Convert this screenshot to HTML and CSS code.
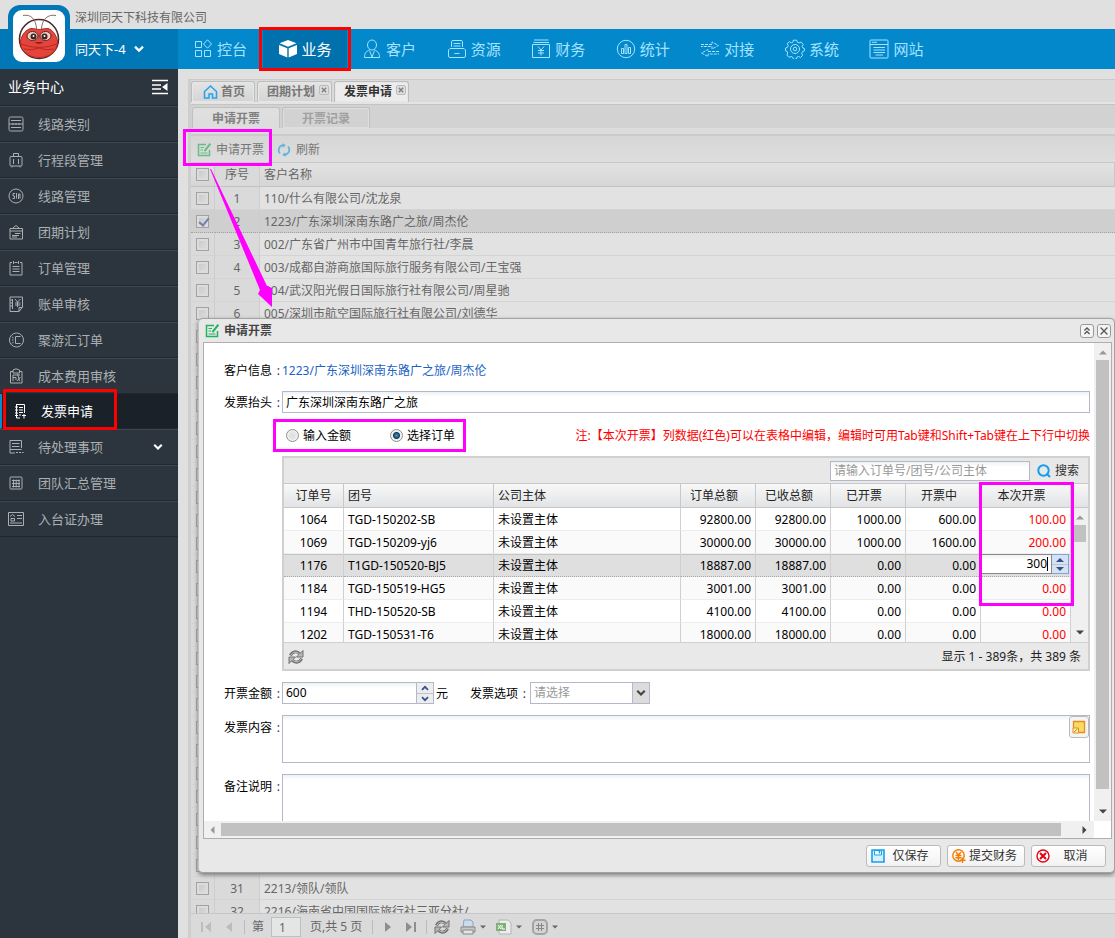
FILE: index.html
```html
<!DOCTYPE html>
<html lang="zh-CN">
<head>
<meta charset="utf-8">
<title>发票申请</title>
<link rel="stylesheet" href="styles.css">
</head>
<body>
<svg class="defs" aria-hidden="true">
  <defs>
    <symbol id="i-edit" viewBox="0 0 14 14"><path d="M9 1.500H1.500V12.500H12.500V7" fill="none" stroke="currentColor" stroke-width="1.500"/><path d="M3.500 4.500H7M3.500 7H6M3.500 10H10.500" stroke="currentColor" fill="none" stroke-width="1.200"/><path d="M13.300.7L7.500 8.200" stroke="currentColor" stroke-width="2"/></symbol>
    <symbol id="i-sync" viewBox="0 0 14 14"><g fill="none" stroke="currentColor" stroke-width="1.700"><path d="M6 2.200A5 5 0 0 0 3 10.500M8 11.800A5 5 0 0 0 11 3.500"/></g><path d="M5.500.2L9 2.300 5.500 4.800zM8.500 9.200V13.800L5 11.700z" fill="currentColor"/></symbol>
    <symbol id="i-reload" viewBox="0 0 16 16"><g fill="none" stroke="#707070" stroke-width="3"><path d="M2.500 6.500C4 2.500 8.500 1.500 12 5"/><path d="M13.500 9.500C12 13.500 7.500 14.500 4 11"/></g><path d="M15 1.500V8H8.500zM1 14.500V8H7.500z" fill="#b8b8b8" stroke="#707070"/><g fill="none" stroke="#c8c8c8"><path d="M3 6C4.500 2.800 8.500 2 12 5.500"/><path d="M13 10C11.500 13.200 7.500 14 4 10.500"/></g></symbol>
    <symbol id="i-down" viewBox="0 0 8 6"><path d="M1 1.200L4 4.200 7 1.200" fill="none" stroke="currentColor" stroke-width="1.700"/></symbol>
    <symbol id="i-up" viewBox="0 0 8 6"><path d="M1 4.800L4 1.800 7 4.800" fill="none" stroke="currentColor" stroke-width="1.700"/></symbol>
    <symbol id="i-tri" viewBox="0 0 8 5"><path d="M0 .5H8L4 4.500z" fill="currentColor"/></symbol>
    <symbol id="i-triup" viewBox="0 0 8 5"><path d="M0 4.500H8L4 .5z" fill="currentColor"/></symbol>
    <symbol id="i-x" viewBox="0 0 10 10"><rect x=".5" y=".5" width="9" height="9" rx="1.500" fill="#dedede" stroke="#bbb"/><path d="M2.800 2.800L7.200 7.200M7.200 2.800L2.800 7.200" stroke="#808080" stroke-width="1.400"/></symbol>
  </defs>
</svg>
<div class="app">
  <header class="top">
    <div class="company">深圳同天下科技有限公司</div>
    <div class="bar">
      <button class="account" type="button">同天下-4 <svg><use href="#i-down"/></svg></button>
      <nav class="nav">
        <a href="#"><svg viewBox="0 0 20 20"><path d="M2.500 2.500h6v6h-6zM2.500 11.500h6v6h-6zM11.500 11.500h6v6h-6zM14.500.8L18.500 5 14.500 9.200 10.500 5z"/></svg>控台</a>
        <a href="#" class="on"><svg class="solid" viewBox="0 0 20 20"><path d="M10 1L18.500 4.300 10 7.800 1.500 4.300zM1 6L9.300 9.300V18.500L1 15zM19 6L10.700 9.300V18.500L19 15z"/></svg>业务</a>
        <a href="#"><svg viewBox="0 0 20 20"><ellipse cx="10" cy="6" rx="4.500" ry="5"/><path d="M7.500 10.500C5 13 2.500 12.500 2.500 18.500H17.500C17.500 12.500 15 13 12.500 10.500M7.500 11.500L10 18M12.500 11.500L10 18"/></svg>客户</a>
        <a href="#"><svg viewBox="0 0 20 20"><path d="M4.500 8V3Q4.500 1.500 6 1.500H14Q15.500 1.500 15.500 3V8M6.500 4.500H13.500M6.500 7H13.500M3 9.500H17L18.500 11V17Q18.500 18.500 17 18.500H3Q1.500 18.500 1.500 17V11zM7.500 14.500H12.500"/></svg>资源</a>
        <a href="#"><svg viewBox="0 0 20 20"><path d="M3 1H17.500M2.500 3.500H18M1.500 5.500H18.500V18.500H1.500zM7 7.500L10 11 13 7.500M10 11V16.500M7 11.500H13M7 14H13"/></svg>财务</a>
        <a href="#"><svg viewBox="0 0 20 20"><circle cx="10" cy="10" r="8.700"/><path d="M5.500 9.500h2v5h-2zM9 5.500h2v9H9zM12.500 8.500h2v6h-2z"/></svg>统计</a>
        <a href="#"><svg viewBox="0 0 20 20"><path d="M1 5.500H12V3L18.500 6.500 12 10V7.500H1" stroke-dasharray="3 1"/><path d="M19 12.500H8V10.500L1.500 14 8 17.500V15H19" stroke-dasharray="3 1"/></svg>对接</a>
        <a href="#"><svg viewBox="0 0 20 20"><path d="M8.300 1.200h3.400l.6 2 1.700.8 2-1 2.200 2.400-1 2 .7 1.600 1.500.5v2.400l-2 .8-.7 1.600 1 2-2.200 2.200-2-1-1.600.7-.7 2H8.400l-.7-2-1.700-.8-2 1L1.800 16l1-2-.7-1.600-1.500-.5V9l2-.8.6-1.600-1-2L4.400 2.800l2 1 1.500-.7z"/><circle cx="10" cy="10" r="4.500"/><circle cx="10" cy="10" r="1.800"/></svg>系统</a>
        <a href="#"><svg viewBox="0 0 20 20"><rect x="1" y="1" width="18" height="18" rx="1"/><path d="M1 5.500H19M3 3.300H8M4.500 8.500H16M4.500 11H16M4.500 13.500H16M6.500 16H14"/></svg>网站</a>
      </nav>
    </div>
    <div class="logo">
      <svg viewBox="0 0 52 52">
        <g fill="none" stroke="#4a2926"><circle cx="26" cy="29" r="19.500" fill="#fff" stroke-width="1.600"/><path d="M23.500 19C23 9 18 4 10 5.500M28.500 19C29 9 35 4 43 5.500" stroke="#8a6a66"/></g>
        <path d="M7.500 31C9 24 13 19.500 18 18.500 22 18.500 24 19.500 26 19.500S31 18.500 35 18.500C39 19.500 43 24 44.500 31 45 41 37 47.500 26 47.500S7 41 7.500 31z" fill="#e5443b" stroke="#b92922"/>
        <path d="M8 34Q26 41 44 34M11 39Q19 41 26 38Q33 41 41 39" fill="none" stroke="#b92922"/>
        <ellipse cx="19.500" cy="26" rx="5.500" ry="4.500" fill="#f4c9c2" stroke="#4a2926"/><ellipse cx="32.500" cy="26" rx="5.500" ry="4.500" fill="#f4c9c2" stroke="#4a2926"/>
        <circle cx="20.500" cy="26.500" r="3" fill="#3a2220"/><circle cx="31.500" cy="26.500" r="3" fill="#3a2220"/><circle cx="20.500" cy="26" r="1" fill="#fff"/><circle cx="31.500" cy="26" r="1" fill="#fff"/>
        <path d="M21.500 32Q26 36 30.500 32z" fill="#8e211b"/>
      </svg>
    </div>
  </header>

  <aside class="side">
    <div class="side-head">业务中心 <button type="button" aria-label="收起"><svg width="16" height="16" viewBox="0 0 16 16"><path d="M0 1.500H16M0 6H9M0 10H9M0 14.500H16" stroke="#fff" stroke-width="1.600"/><path d="M15.500 4V12L10 8z" fill="#fff"/></svg></button></div>
    <a href="#"><svg viewBox="0 0 16 16"><rect x="1" y="1" width="14" height="14" rx="1.500"/><path d="M3 4.500H13M3 11.500H13M1 8H15M5 7V9M8 7V9M11 7V9"/></svg>线路类别</a>
    <a href="#"><svg viewBox="0 0 16 16"><rect x="2" y="4.500" width="12" height="9.500" rx="1"/><path d="M5.500 4V1.500H10.500V4M5.500 7V12M10.500 7V12M4 14V15.500M12 14V15.500"/></svg>行程段管理</a>
    <a href="#"><svg viewBox="0 0 16 16"><circle cx="8" cy="8" r="7"/><path d="M7 5.500H5V8H6.500V10.500H4.500M8.500 5V10.500M10.500 11V6H12V10.500"/></svg>线路管理</a>
    <a href="#"><svg viewBox="0 0 16 16"><path d="M2 4.500H14.500V15H2zM2 7H14.500M5 4L8 1.500 11 4M7 9.500H12.500M4 11.500H11M4 13H9"/></svg>团期计划</a>
    <a href="#"><svg viewBox="0 0 16 16"><path d="M4 2.500H2V15H14V2.500H12M5.500 1V4M10.500 1V4M6.500 2.500H9.500M4.500 6.500H11.500M4.500 9H11.500M4.500 11.500H11.500"/></svg>订单管理</a>
    <a href="#"><svg viewBox="0 0 16 16"><path d="M2 1H14.500V11L11 15.500H2zM11 15.500V11.500H14.500M4.500 3V13M2 4H4M2 7H4M2 10H4M7 3L9.500 6 12.500 3M9.500 6V11M7 7H12.500M7 9H12.500"/></svg>账单审核</a>
    <a href="#"><svg viewBox="0 0 16 16"><circle cx="8.500" cy="8" r="7"/><path d="M12.500 4.500H7.500V11.500H12.500M4 5L5.500 6M4 8H5.500M4 11.500L5.500 10"/></svg>聚游汇订单</a>
    <a href="#"><svg viewBox="0 0 16 16"><path d="M5 3.500H2.500V15H14V3.500H11.500M5 5V2L8 .8 11.500 2V5zM5 7H12M5 7V13M5 9.500H8V12M9.500 5.500L11.500 13M12.500 9L9 13"/></svg>成本费用审核</a>
    <a href="#" class="on"><svg viewBox="0 0 16 16"><path d="M4.500 1.500H12.500V10M8 15H4.500V1M3 4H6M3 7H6M3 10H6M3 12.500H6M7 4.500H11M7 7H11M7 9.500H11M7 12H9M10 12.500H14M12 11V15.500"/></svg>发票申请</a>
    <a href="#"><svg viewBox="0 0 16 16"><path d="M13.500 9V1.500H2V14H7M2 10.500H13.500M4 4.500H11.500M4 7.500H11.500M8 13.500H10M11 13.500H13M14 13.500H15.500"/></svg>待处理事项<svg class="chev" viewBox="0 0 8 6"><use href="#i-down"/></svg></a>
    <a href="#"><svg viewBox="0 0 16 16"><rect x="2" y="2" width="12" height="12" rx="1"/><path d="M4 5.500H12M4 8.500H12M4 11.500H12M5.500 4.500V12.500M8.200 4.500V12.500M11 4.500V12.500"/></svg>团队汇总管理</a>
    <a href="#"><svg viewBox="0 0 16 16"><path d="M.5 1.500H15.500V14.500H.5zM2 5.500L4.500 3.500 7 5.500M3 7.500H6.500V10H3zM9 4.500H14M9 7.500H14M2 12H14"/></svg>入台证办理</a>
  </aside>

  <main class="main">
    <div class="panel">
      <div class="tabs">
        <button type="button"><svg class="home" viewBox="0 0 14 14"><path d="M1 6.500L7 1 13 6.500V13H9V9H5.500V13H1z"/></svg>首页</button>
        <button type="button" class="closable">团期计划<svg class="x"><use href="#i-x"/></svg></button>
        <button type="button" class="closable on">发票申请<svg class="x"><use href="#i-x"/></svg></button>
      </div>
      <div class="subtabs">
        <button type="button" class="on">申请开票</button>
        <button type="button">开票记录</button>
      </div>
      <div class="toolbar">
        <button type="button"><svg class="green"><use href="#i-edit"/></svg>申请开票</button>
        <button type="button"><svg class="blue"><use href="#i-sync"/></svg>刷新</button>
      </div>
      <div class="list">
        <table>
          <colgroup><col class="c-check"><col class="c-no"><col></colgroup>
          <thead><tr><th><input type="checkbox" aria-label="全选"></th><th class="no">序号</th><th class="name">客户名称</th></tr></thead>
          <tbody id="customers"></tbody>
        </table>
      </div>
      <div class="pager">
        <button type="button" class="off" aria-label="首页"><svg width="12" height="12" viewBox="0 0 12 12"><path d="M1 1H3V11H1zM11 1V11L5 6z"/></svg></button>
        <button type="button" class="off" aria-label="上一页"><svg width="12" height="12" viewBox="0 0 12 12"><path d="M9 1V11L3 6z"/></svg></button>
        <i></i>
        <label for="page">第</label><input id="page" type="text" value="1"><span class="total">页,共 5 页</span>
        <i></i>
        <button type="button" aria-label="下一页"><svg width="12" height="12" viewBox="0 0 12 12"><path d="M3 1V11L9 6z"/></svg></button>
        <button type="button" aria-label="末页"><svg width="12" height="12" viewBox="0 0 12 12"><path d="M9 1H11V11H9zM1 1V11L7 6z"/></svg></button>
        <i></i>
        <button type="button" aria-label="刷新"><svg width="16" height="16"><use href="#i-reload"/></svg></button>
        <button type="button" class="drop" aria-label="打印"><svg width="16" height="16" viewBox="0 0 16 16"><path d="M4 1H11L13 3V8H3z" fill="#cddcec" stroke="#8ba3bd"/><path d="M1 8H15V13H1z" fill="#c8c8c8" stroke="#888"/><path d="M3 11H13V15H3z" fill="#e4e4e4" stroke="#888"/></svg><svg width="6" height="4"><use href="#i-tri"/></svg></button>
        <button type="button" class="drop" aria-label="导出"><svg width="16" height="16" viewBox="0 0 16 16"><path d="M3 1H12L15 4V15H3z" fill="#ececec" stroke="#b4b4b4"/><path d="M0 4H10V12H0z" fill="#7fb077"/><path d="M2 6L5 10M5 6L2 10M6 6V10H9" stroke="#fff" fill="none"/></svg><svg width="6" height="4"><use href="#i-tri"/></svg></button>
        <button type="button" class="drop" aria-label="列设置"><svg width="16" height="16" viewBox="0 0 16 16"><rect x="1" y="1" width="14" height="14" rx="4" fill="#d4d4d4" stroke="#a4a4a4" stroke-width="2"/><path d="M6.500 4V12M9.500 4V12M4 6.500H12M4 9.500H12" stroke="#888"/></svg><svg width="6" height="4"><use href="#i-tri"/></svg></button>
      </div>
    </div>
  </main>

  <section class="dialog" role="dialog" aria-labelledby="dlg-title">
    <div class="dlg-head">
      <svg class="green"><use href="#i-edit"/></svg><h2 id="dlg-title">申请开票</h2>
      <button type="button" aria-label="折叠"><svg viewBox="0 0 14 14"><path d="M4 6.500L7 3.500 10 6.500M4 10.500L7 7.500 10 10.500"/></svg></button>
      <button type="button" aria-label="关闭"><svg viewBox="0 0 14 14"><path d="M3 3L11 11M11 3L3 11"/></svg></button>
    </div>
    <div class="dlg-body">
      <form class="form">
        <div class="row info"><span class="lab">客户信息<b>:</b></span><a href="#">1223/广东深圳深南东路广之旅/周杰伦</a></div>
        <div class="row"><label class="lab" for="title">发票抬头<b>:</b></label><input id="title" class="grow" type="text" value="广东深圳深南东路广之旅"></div>
        <div class="row modes">
          <label><input type="radio" name="mode">输入金额</label>
          <label><input type="radio" name="mode" checked>选择订单</label>
          <p>注:【本次开票】列数据(红色)可以在表格中编辑，编辑时可用Tab键和Shift+Tab键在上下行中切换</p>
        </div>
        <div class="orders">
          <div class="find"><input type="text" aria-label="搜索订单" placeholder="请输入订单号/团号/公司主体"><button type="button"><svg viewBox="0 0 14 14"><circle cx="6.500" cy="6.500" r="5.200"/><path d="M9.500 9.500L13 13"/></svg>搜索</button></div>
          <div class="sheet">
            <table>
              <colgroup><col class="w-id"><col class="w-code"><col><col class="w-num"><col class="w-num"><col class="w-num"><col class="w-num"><col class="w-now"></colgroup>
              <thead><tr><th class="id">订单号</th><th class="l">团号</th><th class="l">公司主体</th><th>订单总额</th><th>已收总额</th><th>已开票</th><th>开票中</th><th>本次开票</th></tr></thead>
              <tbody>
                <tr><td>1064</td><td>TGD-150202-SB</td><td>未设置主体</td><td>92800.00</td><td>92800.00</td><td>1000.00</td><td>600.00</td><td>100.00</td></tr>
                <tr><td>1069</td><td>TGD-150209-yj6</td><td>未设置主体</td><td>30000.00</td><td>30000.00</td><td>1000.00</td><td>1600.00</td><td>200.00</td></tr>
                <tr class="sel"><td>1176</td><td>T1GD-150520-BJ5</td><td>未设置主体</td><td>18887.00</td><td>18887.00</td><td>0.00</td><td>0.00</td><td class="editing"><div class="editor"><input type="text" aria-label="本次开票" value="300"><span class="spin"><button type="button" aria-label="增加"><svg><use href="#i-triup"/></svg></button><button type="button" aria-label="减少"><svg><use href="#i-tri"/></svg></button></span></div></td></tr>
                <tr><td>1184</td><td>TGD-150519-HG5</td><td>未设置主体</td><td>3001.00</td><td>3001.00</td><td>0.00</td><td>0.00</td><td>0.00</td></tr>
                <tr><td>1194</td><td>THD-150520-SB</td><td>未设置主体</td><td>4100.00</td><td>4100.00</td><td>0.00</td><td>0.00</td><td>0.00</td></tr>
                <tr><td>1202</td><td>TGD-150531-T6</td><td>未设置主体</td><td>18000.00</td><td>18000.00</td><td>0.00</td><td>0.00</td><td>0.00</td></tr>
              </tbody>
            </table>
            <div class="rail"><div class="rail-head"></div><div class="vbar"><svg class="dim"><use href="#i-triup"/></svg><span class="short"></span><svg class="end"><use href="#i-tri"/></svg></div></div>
          </div>
          <div class="foot"><button type="button" aria-label="刷新"><svg width="16" height="16"><use href="#i-reload"/></svg></button><span>显示 1 - 389条，共 389 条</span></div>
        </div>
        <div class="row"><label class="lab" for="amount">开票金额<b>:</b></label>
          <div class="number"><input id="amount" type="text" value="600"><span class="spin"><button type="button" aria-label="增加"><svg><use href="#i-up"/></svg></button><button type="button" aria-label="减少"><svg><use href="#i-down"/></svg></button></span></div>
          <span class="unit">元</span>
          <label class="lab" for="option">发票选项<b>:</b></label>
          <div class="pick"><select id="option"><option>请选择</option></select><svg viewBox="0 0 8 6"><use href="#i-down"/></svg></div>
        </div>
        <div class="row area"><label class="lab" for="content">发票内容<b>:</b></label><textarea id="content"></textarea>
          <button class="note" type="button" aria-label="选择内容"><svg viewBox="0 0 14 14"><path d="M1.500 1.500H12.500V12.500H6.500L1.500 8z" fill="#f8dc60" stroke="#e88b20" stroke-width="1.300"/><path d="M1 8H6.500V13H1z" fill="#fff3c0" stroke="#e88b20"/><path d="M2 12L5.500 9" stroke="#b58a10"/></svg></button></div>
        <div class="row area"><label class="lab" for="memo">备注说明<b>:</b></label><textarea id="memo"></textarea></div>
      </form>
      <div class="vbar"><svg class="dim"><use href="#i-triup"/></svg><span class="long"></span><svg class="end"><use href="#i-tri"/></svg></div>
      <div class="hbar"><svg class="dim" viewBox="0 0 5 8"><path d="M4.500 0V8L.5 4z" fill="currentColor"/></svg><span></span><svg class="end" viewBox="0 0 5 8"><path d="M.5 0V8L4.500 4z" fill="currentColor"/></svg></div>
    </div>
    <div class="dlg-foot">
      <button type="button"><svg viewBox="0 0 14 14"><path d="M1 1H13V13H1z" fill="#d9f0ff" stroke="#18a0ea" stroke-width="1.600"/><path d="M3.500 1.500H10.500V6H3.500z" fill="#fff" stroke="#18a0ea"/><path d="M8.500 2V4.500" stroke="#18a0ea" stroke-width="1.500"/></svg><span>仅保存</span></button>
      <button type="button" class="wide"><svg viewBox="0 0 14 14"><circle cx="6.500" cy="6.500" r="5.700" fill="none" stroke="#f57c00" stroke-width="1.400"/><path d="M4 3L6.500 6 9 3M6.500 6V11M3.500 6.500H9.500M3.500 8.700H9.500M10.500 8.500V14M8 11.300H13.500" fill="none" stroke="#f57c00" stroke-width="1.400"/></svg><span>提交财务</span></button>
      <button type="button"><svg viewBox="0 0 14 14"><circle cx="7" cy="7" r="6" fill="#fff" stroke="#e60012" stroke-width="1.400"/><path d="M4 4L10 10M10 4L4 10" stroke="#e60012" stroke-width="2"/></svg><span>取消</span></button>
    </div>
  </section>

  <div class="mark red m-nav"></div>
  <div class="mark red m-side"></div>
  <div class="mark m-apply"></div>
  <div class="mark m-mode"></div>
  <div class="mark m-now"></div>
  <svg class="arrow" viewBox="0 0 66 142"><path d="M0 1H1L57 118 62 120 62 139 48 126 50 122z" fill="#f0f"/></svg>
</div>
<script src="app.js"></script>
</body>
</html>
```
FILE: app.js
```js
const names = {
  1: '110/什么有限公司/沈龙泉',
  2: '1223/广东深圳深南东路广之旅/周杰伦',
  3: '002/广东省广州市中国青年旅行社/李晨',
  4: '003/成都自游商旅国际旅行服务有限公司/王宝强',
  5: '004/武汉阳光假日国际旅行社有限公司/周星驰',
  6: '005/深圳市航空国际旅行社有限公司/刘德华',
  31: '2213/领队/领队',
  32: '2216/海南省中国国际旅行社三亚分社/'
};
const body = document.getElementById('customers');
for (let n = 1; n <= 32; n++) {
  const row = body.insertRow();
  const box = document.createElement('input');
  box.type = 'checkbox';
  box.setAttribute('aria-label', '选择第' + n + '行');
  if (n === 2) {
    box.checked = true;
    row.className = 'sel';
  }
  row.insertCell().append(box);
  const no = row.insertCell();
  no.className = 'no';
  no.textContent = names[n] ? n : '';
  const name = row.insertCell();
  name.className = 'name';
  name.textContent = names[n] || '';
}
```
FILE: styles.css
```css
* { box-sizing: border-box; }
body { margin: 0; }
body, button, input, select, textarea { font: 12px/18px "Noto Sans", "Noto Sans CJK SC", sans-serif; }
button { padding: 0; border: 0; background: none; color: inherit; display: flex; align-items: center; }
input, select, textarea { margin: 0; color: #000; border-radius: 0; outline: 0; }
a { text-decoration: none; }
svg { flex: none; display: block; }
h2, p { margin: 0; }
table { border-collapse: separate; border-spacing: 0; table-layout: fixed; width: 100%; }
th { font-weight: 400; }
.defs { position: absolute; width: 0; height: 0; }

.app { position: relative; height: 100vh; min-height: 700px; overflow: hidden; display: grid; grid-template: 69px 1fr / 178px 1fr; background: #e0e0e0; }

/* top bar */
.top { grid-column: 1 / -1; position: relative; }
.company { height: 29px; padding: 9px 0 0 75px; color: #666; }
.bar { height: 40px; display: flex; background: #0388cc; }
.account { width: 178px; padding-left: 75px; gap: 7px; background: #0078b8; color: #fff; font-size: 13px; }
.account svg { width: 12px; height: 8px; }
.nav { flex: 1; max-width: 761px; display: grid; grid-template-columns: repeat(9, 1fr); }
.nav a { display: flex; align-items: center; gap: 4px; padding-left: 15px; color: #a5e3ff; font-size: 15px; }
.nav svg { width: 20px; height: 20px; fill: none; stroke: currentColor; }
.nav .solid { fill: #fff; stroke: none; }
.nav .on { background: #0071ad; color: #fff; }
.logo { position: absolute; left: 8px; top: 5px; width: 62px; height: 64px; padding: 5px; border-radius: 12px 12px 0 0; background: #0078b8; }
.logo svg { width: 52px; height: 52px; border-radius: 9px; background: #fff; }

/* side menu */
.side { background: #2c353d; }
.side-head { height: 37px; padding: 0 10px 0 8px; display: flex; align-items: center; justify-content: space-between; color: #fff; font-size: 14px; border-bottom: 1px solid #20282f; }
.side a { height: 36px; display: flex; align-items: center; gap: 14px; padding: 0 15px 0 8px; color: #aaafb3; font-size: 13px; border-top: 1px solid #3c4850; border-bottom: 1px solid #20282f; }
.side a svg { width: 16px; height: 16px; fill: none; stroke: currentColor; }
.side a .chev { width: 10px; height: 8px; margin-left: auto; color: #fff; stroke: none; }
.side .on { height: 35px; border-top: 0; padding-left: 10px; gap: 13px; border-left: 2px solid #0a8ccc; background: #1a2129; color: #fff; }

/* background panel */
.main { padding: 10px 0 0 10px; min-width: 0; min-height: 0; color: #666; }
.panel { height: 100%; display: flex; flex-direction: column; border-left: 3px solid #cecece; border-top: 1px solid #cacaca; background: #d9d9d9; }
.tabs { height: 24px; flex: none; display: flex; gap: 2px; padding: 1px 0 0; border-bottom: 2px solid #e4e4e4; background: #dadada; }
.tabs button { height: 21px; gap: 3px; padding: 0 9px 0 11px; border: 1px solid #bdbdbd; border-bottom: 0; border-radius: 3px 3px 0 0; background: linear-gradient(#e4e4e4, #d4d4d4); box-shadow: inset 0 0 0 1px #e6e6e6; font-weight: 700; color: #777; }
.tabs .closable { padding: 0 2px 0 9px; }
.tabs .on { background: #ececec; color: #333; }
.tabs .x { width: 10px; height: 10px; align-self: flex-start; margin-top: 3px; margin-left: 1px; }
.home { width: 15px; height: 14px; fill: none; stroke: #20a4f0; stroke-width: 1.5; }
.subtabs { height: 32px; flex: none; display: flex; align-items: flex-start; gap: 2px; padding: 2px 1px 0; border-top: 1px solid #c4c4c4; border-bottom: 2px solid #cbcbcb; background: linear-gradient(#d2d2d2 23px, #dcdcdc 23px); }
.subtabs button { width: 88px; height: 21px; padding-top: 2px; justify-content: center; border: 1px solid #c0c0c0; border-bottom: 0; border-radius: 3px 3px 0 0; box-shadow: inset 0 0 0 1px #dedede; color: #a0a0a0; font-weight: 700; }
.subtabs .on { background: linear-gradient(#e0e0e0, #dcdcdc); color: #808080; }
.toolbar { height: 27px; flex: none; display: flex; gap: 13px; padding: 2px 6px 0; border-bottom: 1px solid #c8c8c8; background: linear-gradient(#d6d6d6, #dedede); color: #777; }
.toolbar button { gap: 5px; }
.toolbar svg { width: 14px; height: 14px; }
.toolbar .green { color: #68bd85; }
.toolbar .blue { color: #62b4e0; }
.list { flex: 1; min-height: 0; overflow: hidden; background: #e2e2e2; }
.c-check { width: 24px; }
.c-no { width: 45px; }
.list th, .list td { height: 23px; padding: 0; border-bottom: 1px solid #d4d4d4; white-space: nowrap; text-align: left; }
.list th { height: 24px; border-bottom-color: #c2c2c2; border-right: 1px solid #c8c8c8; background: linear-gradient(#e2e2e2, #d6d6d6); }
.list td:first-child, .list .no { border-right: 1px solid #cdcdcd; background: #dadada; text-align: center; }
.list td.no, .list td.name { padding-top: 2px; }
.list .name { padding-left: 4px; }
.list .sel td { background: #cfcfcf; border-bottom: 1px dotted #a0a0a0; }
input[type=checkbox] { appearance: none; display: block; width: 13px; height: 13px; margin: 0 5px; border: 1px solid #a2a2a2; background: linear-gradient(135deg, #c4c6ca, #e0e0e0); box-shadow: inset 0 0 0 2px #dcdcdc; }
input[type=checkbox]:checked::after { content: ""; display: block; width: 4px; height: 8px; margin: 0 0 0 4px; border: solid #7480aa; border-width: 0 2px 2px 0; rotate: 40deg; }
.pager { height: 25px; flex: none; display: flex; align-items: center; gap: 7px; padding: 2px 7px 0; border-top: 1px solid #c6c6c6; background: #dadada; }
.pager button { width: 16px; justify-content: center; gap: 4px; fill: #8e8e8e; }
.pager .drop { width: 26px; margin-left: 3px; }
.pager .off { fill: #bcbcbc; }
.pager i { width: 1px; height: 14px; background: #bbb; }
.pager input { width: 30px; height: 20px; padding: 0 7px; border: 1px solid #bcbec8; background: #e4e6e6; color: #666; }
.pager .total { margin: 0 3px 0 2px; }

/* dialog window */
.dialog { position: absolute; inset: 318px 0 65px 198px; display: flex; flex-direction: column; padding: 0 2px 0 4px; border: 1px solid #a2a2a2; border-left-color: #c0c0c0; border-radius: 5px; background: #e8e8e8; box-shadow: 0 2px 4px #777; }
.dlg-head { height: 23px; flex: none; display: flex; align-items: center; gap: 3px; padding: 0 1px 0 2px; }
.dlg-head h2 { flex: 1; margin-left: 2px; font-size: 12px; line-height: 18px; color: #444; }
.green { width: 14px; height: 14px; color: #22b35e; }
.dlg-head button { width: 14px; height: 14px; border: 1px solid #999; border-radius: 3px; background: #f4f4f4; }
.dlg-head button svg { width: 12px; height: 12px; fill: none; stroke: #555; stroke-width: 1.5; }
.dlg-body { flex: 1; min-height: 0; display: grid; grid-template: minmax(0, 1fr) 17px / minmax(0, 1fr) 17px; border: 1px solid #b5abae; background: #fff; }
.form { overflow: hidden; display: flex; flex-direction: column; gap: 11px; padding: 17px 4px 0 20px; }
.row { flex: none; display: flex; align-items: center; min-height: 22px; }
.info { min-height: 20px; padding-top: 2px; }
.info a { color: #1a62c4; }
.lab { width: 58px; display: flex; justify-content: space-between; padding: 2px 2px 0 0; }
.info .lab { padding-top: 0; }
.lab b { font-weight: 400; color: #336; }
.form input[type=text], textarea, select { border: 1px solid #b5b8c8; background: linear-gradient(#eef2f2, #fff 5px); padding: 0 3px; }
.grow { flex: 1; min-width: 0; height: 22px; }
.modes { min-height: 21px; padding: 2px 0 0 62px; gap: 39px; }
.modes label { display: flex; align-items: center; gap: 4px; }
.modes p { margin-left: auto; color: #f00; white-space: nowrap; }
input[type=radio] { appearance: none; width: 13px; height: 13px; border: 1px solid #8e8f8f; border-radius: 50%; background: radial-gradient(#ddd, #f2f2f2); box-shadow: inset 0 0 0 1px #f4f4f4; }
input[type=radio]:checked { background: radial-gradient(#4a9fc5, #123c5a 3px, #eee 4px); }

.orders { flex: none; margin-left: 58px; border: 2px solid #d0d0d0; }
.find { height: 25px; display: flex; align-items: center; justify-content: flex-end; gap: 7px; padding-right: 9px; background: #e8e8e8; }
.form .find input { width: 200px; height: 20px; }
.find input::placeholder { color: #999; opacity: 1; }
.find button { gap: 4px; color: #333; }
.find svg { width: 14px; height: 14px; fill: none; stroke: #109fee; stroke-width: 2; }
.sheet { height: 160px; display: flex; align-items: flex-start; overflow: hidden; border-bottom: 1px solid #d0d0d0; }
.sheet table { flex: 1; min-width: 0; }
.w-id { width: 60px; }
.w-code { width: 150px; }
.w-num { width: 75px; }
.w-now { width: 90px; }
.sheet th { height: 25px; padding: 0 8px 0 0; border: solid #c8c8c8; border-width: 1px 1px 1px 0; background: linear-gradient(#f8f8f8, #e2e3e5); color: #222; }
.sheet .id { padding: 0; }
.sheet .l { padding: 0 4px; text-align: left; }
.sheet td { height: 23px; padding: 2px 4px 0; border-right: 1px solid #d0d0d0; border-bottom: 1px solid #ededed; text-align: right; white-space: nowrap; }
.sheet tr:nth-child(even) td { background: #fafafa; }
.sheet td:nth-child(1) { text-align: center; }
.sheet td:nth-child(2), .sheet td:nth-child(3) { text-align: left; }
.sheet td:last-child { color: #f00; }
.sheet .sel td { background: #dfdfdf; border-bottom: 1px dotted #a8a8a8; box-shadow: inset 0 1px #c4c4c4; }
.sheet .sel .editing { padding: 0 1px 2px 0; }
.editor { height: 20px; display: flex; position: relative; }
.form .editor input { flex: 1; min-width: 0; text-align: right; border-color: #888; border-left: 0; padding-right: 4px; }
.editor::after { content: ""; position: absolute; right: 21px; top: 3px; width: 1px; height: 14px; background: #000; }
.spin { width: 17px; display: grid; grid-template-rows: 1fr 1fr; border: 1px solid #b5b8c8; border-left: 0; background: #ededf0; color: #34508c; }
.spin button { justify-content: center; min-height: 0; }
.spin button + button { border-top: 1px solid #c0c2cc; }
.spin svg { width: 8px; height: 6px; }
.editor .spin { background: #d4e2f3; border-color: #7da5d8; }
.rail { width: 17px; align-self: stretch; display: flex; flex-direction: column; background: #f0f0f0; }
.rail-head { height: 25px; flex: none; border: solid #c8c8c8; border-width: 1px 0; background: linear-gradient(#f8f8f8, #e2e3e5); }
.vbar { flex: 1; display: flex; flex-direction: column; align-items: center; padding: 7px 0; gap: 5px; background: #f0f0f0; color: #444; }
.vbar svg { width: 8px; height: 5px; }
.vbar .dim, .hbar .dim { color: #999; }
.vbar span { width: 13px; background: #c1c1c1; }
.vbar .short { height: 17px; width: 12px; }
.vbar .long { flex: 1; margin-bottom: 15px; }
.vbar .end { margin-top: auto; }
.hbar { display: flex; align-items: center; gap: 6px; padding: 0 7px 0 6px; background: #f0f0f0; color: #444; }
.hbar svg { width: 5px; height: 8px; }
.hbar span { flex: 1; height: 13px; margin-right: 15px; background: #c1c1c1; }
.foot { height: 26px; display: flex; align-items: center; justify-content: space-between; padding: 2px 7px 0 4px; background: #e9e9e9; color: #222; }

.number { width: 152px; height: 22px; display: flex; }
.number input { flex: 1; min-width: 0; }
.unit { width: 36px; padding: 2px 0 0 2px; }
.pick { position: relative; width: 120px; height: 22px; margin-left: 2px; }
.pick select { width: 100%; height: 22px; appearance: none; color: #999; background: linear-gradient(to right, transparent 101px, #b5b8c8 101px, #b5b8c8 102px, transparent 102px), linear-gradient(to right, #fff 102px, #dcdcdc 102px); }
.pick svg { position: absolute; right: 4px; top: 7px; width: 10px; height: 8px; color: #444; pointer-events: none; }
.area { position: relative; align-items: flex-start; }
.area .lab { padding-top: 4px; }
textarea { flex: 1; height: 48px; resize: none; }
.note { position: absolute; right: 1px; top: 1px; width: 20px; height: 22px; justify-content: center; border: 1px solid #bbb; border-radius: 3px; background: #f4f4f4; }
.note svg { width: 14px; height: 14px; }

.dlg-foot { height: 33px; flex: none; display: flex; align-items: flex-start; justify-content: flex-end; gap: 6px; padding: 6px 6px 0; }
.dlg-foot button { width: 75px; height: 22px; padding: 0 4px; border: 1px solid #bbb; border-radius: 3px; background: linear-gradient(#fff, #f2f2f2); color: #333; }
.dlg-foot .wide { width: 78px; }
.dlg-foot svg { width: 14px; height: 14px; }
.dlg-foot span { flex: 1; text-align: center; white-space: nowrap; }

/* callouts */
.mark { position: absolute; border: 3px solid #f0f; pointer-events: none; }
.red { border-color: #f00; }
.m-nav { left: 259px; top: 27px; width: 92px; height: 44px; }
.m-side { left: 3px; top: 389px; width: 114px; height: 41px; }
.m-apply { left: 183px; top: 129px; width: 89px; height: 37px; }
.m-mode { left: 273px; top: 419px; width: 193px; height: 33px; }
.m-now { left: 979px; top: 482px; width: 95px; height: 124px; }
.arrow { position: absolute; left: 210px; top: 168px; width: 66px; height: 142px; pointer-events: none; }
```
